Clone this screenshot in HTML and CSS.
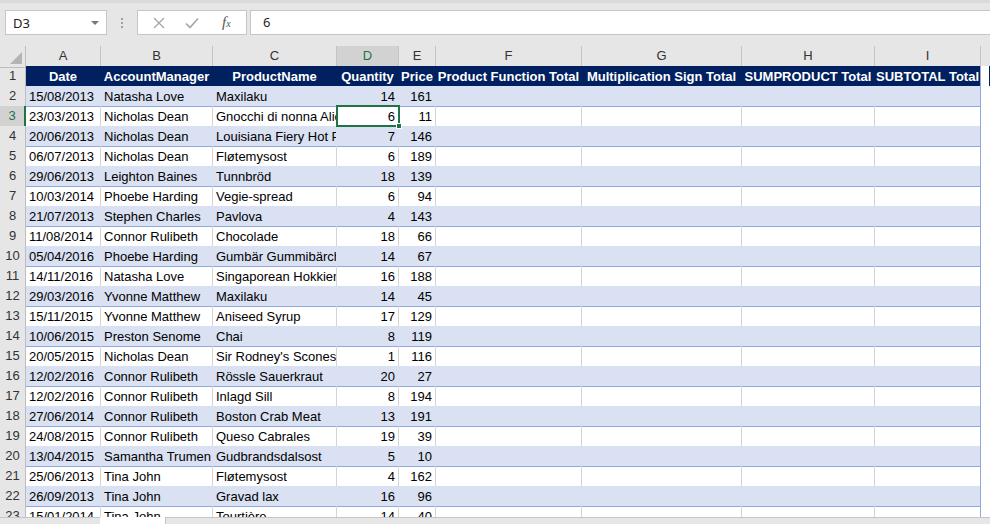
FILE: index.html
```html
<!DOCTYPE html>
<html>
<head>
<meta charset="utf-8">
<link rel="stylesheet" href="styles.css">
</head>
<body>
<div class="app">
  <div class="fbar">
    <div class="namebox"><span class="nb-text">D3</span><span class="nb-arrow"></span></div>
    <div class="dots"><i></i><i></i><i></i></div>
    <div class="btns">
      <svg class="ic-x" width="12" height="12" viewBox="0 0 12 12"><path d="M1 1L11 11M11 1L1 11" stroke="#a6a6a6" stroke-width="1.3" fill="none"/></svg>
      <svg class="ic-ok" width="14" height="12" viewBox="0 0 14 12"><path d="M1 6.5L5 10.5L13 1.5" stroke="#a6a6a6" stroke-width="1.6" fill="none"/></svg>
      <span class="fx">f<sub>x</sub></span>
    </div>
    <div class="finput">6</div>
  </div>
  <div class="sheet">
    <div class="row colhdr">
      <div class="corner"><span class="tri"></span></div>
      <div class="ch">A</div><div class="ch">B</div><div class="ch">C</div><div class="ch sel">D</div><div class="ch">E</div><div class="ch">F</div><div class="ch">G</div><div class="ch">H</div><div class="ch">I</div><div class="ch last"></div>
    </div>
    <div class="row thead">
      <div class="rh">1</div>
      <div class="c h">Date</div><div class="c h">AccountManager</div><div class="c h">ProductName</div><div class="c h">Quantity</div><div class="c h">Price</div><div class="c h">Product Function Total</div><div class="c h">Multiplication Sign Total</div><div class="c h">SUMPRODUCT Total</div><div class="c h">SUBTOTAL Total</div><div class="c x"></div>
    </div>
    <div class="row band"><div class="rh">2</div><div class="c">15/08/2013</div><div class="c">Natasha Love</div><div class="c">Maxilaku</div><div class="c n">14</div><div class="c n">161</div><div class="c"></div><div class="c"></div><div class="c"></div><div class="c"></div><div class="c x"></div></div>
    <div class="row plain"><div class="rh rsel">3</div><div class="c">23/03/2013</div><div class="c">Nicholas Dean</div><div class="c">Gnocchi di nonna Alice</div><div class="c n active">6<span class="selbox"></span><span class="handle"></span></div><div class="c n">11</div><div class="c"></div><div class="c"></div><div class="c"></div><div class="c"></div><div class="c x"></div></div>
    <div class="row band"><div class="rh">4</div><div class="c">20/06/2013</div><div class="c">Nicholas Dean</div><div class="c">Louisiana Fiery Hot Pepper Sauce</div><div class="c n">7</div><div class="c n">146</div><div class="c"></div><div class="c"></div><div class="c"></div><div class="c"></div><div class="c x"></div></div>
    <div class="row plain"><div class="rh">5</div><div class="c">06/07/2013</div><div class="c">Nicholas Dean</div><div class="c">Fløtemysost</div><div class="c n">6</div><div class="c n">189</div><div class="c"></div><div class="c"></div><div class="c"></div><div class="c"></div><div class="c x"></div></div>
    <div class="row band"><div class="rh">6</div><div class="c">29/06/2013</div><div class="c">Leighton Baines</div><div class="c">Tunnbröd</div><div class="c n">18</div><div class="c n">139</div><div class="c"></div><div class="c"></div><div class="c"></div><div class="c"></div><div class="c x"></div></div>
    <div class="row plain"><div class="rh">7</div><div class="c">10/03/2014</div><div class="c">Phoebe Harding</div><div class="c">Vegie-spread</div><div class="c n">6</div><div class="c n">94</div><div class="c"></div><div class="c"></div><div class="c"></div><div class="c"></div><div class="c x"></div></div>
    <div class="row band"><div class="rh">8</div><div class="c">21/07/2013</div><div class="c">Stephen Charles</div><div class="c">Pavlova</div><div class="c n">4</div><div class="c n">143</div><div class="c"></div><div class="c"></div><div class="c"></div><div class="c"></div><div class="c x"></div></div>
    <div class="row plain"><div class="rh">9</div><div class="c">11/08/2014</div><div class="c">Connor Rulibeth</div><div class="c">Chocolade</div><div class="c n">18</div><div class="c n">66</div><div class="c"></div><div class="c"></div><div class="c"></div><div class="c"></div><div class="c x"></div></div>
    <div class="row band"><div class="rh">10</div><div class="c">05/04/2016</div><div class="c">Phoebe Harding</div><div class="c">Gumbär Gummibärchen</div><div class="c n">14</div><div class="c n">67</div><div class="c"></div><div class="c"></div><div class="c"></div><div class="c"></div><div class="c x"></div></div>
    <div class="row plain"><div class="rh">11</div><div class="c">14/11/2016</div><div class="c">Natasha Love</div><div class="c">Singaporean Hokkien Fried Mee</div><div class="c n">16</div><div class="c n">188</div><div class="c"></div><div class="c"></div><div class="c"></div><div class="c"></div><div class="c x"></div></div>
    <div class="row band"><div class="rh">12</div><div class="c">29/03/2016</div><div class="c">Yvonne Matthew</div><div class="c">Maxilaku</div><div class="c n">14</div><div class="c n">45</div><div class="c"></div><div class="c"></div><div class="c"></div><div class="c"></div><div class="c x"></div></div>
    <div class="row plain"><div class="rh">13</div><div class="c">15/11/2015</div><div class="c">Yvonne Matthew</div><div class="c">Aniseed Syrup</div><div class="c n">17</div><div class="c n">129</div><div class="c"></div><div class="c"></div><div class="c"></div><div class="c"></div><div class="c x"></div></div>
    <div class="row band"><div class="rh">14</div><div class="c">10/06/2015</div><div class="c">Preston Senome</div><div class="c">Chai</div><div class="c n">8</div><div class="c n">119</div><div class="c"></div><div class="c"></div><div class="c"></div><div class="c"></div><div class="c x"></div></div>
    <div class="row plain"><div class="rh">15</div><div class="c">20/05/2015</div><div class="c">Nicholas Dean</div><div class="c">Sir Rodney's Scones</div><div class="c n">1</div><div class="c n">116</div><div class="c"></div><div class="c"></div><div class="c"></div><div class="c"></div><div class="c x"></div></div>
    <div class="row band"><div class="rh">16</div><div class="c">12/02/2016</div><div class="c">Connor Rulibeth</div><div class="c">Rössle Sauerkraut</div><div class="c n">20</div><div class="c n">27</div><div class="c"></div><div class="c"></div><div class="c"></div><div class="c"></div><div class="c x"></div></div>
    <div class="row plain"><div class="rh">17</div><div class="c">12/02/2016</div><div class="c">Connor Rulibeth</div><div class="c">Inlagd Sill</div><div class="c n">8</div><div class="c n">194</div><div class="c"></div><div class="c"></div><div class="c"></div><div class="c"></div><div class="c x"></div></div>
    <div class="row band"><div class="rh">18</div><div class="c">27/06/2014</div><div class="c">Connor Rulibeth</div><div class="c">Boston Crab Meat</div><div class="c n">13</div><div class="c n">191</div><div class="c"></div><div class="c"></div><div class="c"></div><div class="c"></div><div class="c x"></div></div>
    <div class="row plain"><div class="rh">19</div><div class="c">24/08/2015</div><div class="c">Connor Rulibeth</div><div class="c">Queso Cabrales</div><div class="c n">19</div><div class="c n">39</div><div class="c"></div><div class="c"></div><div class="c"></div><div class="c"></div><div class="c x"></div></div>
    <div class="row band"><div class="rh">20</div><div class="c">13/04/2015</div><div class="c">Samantha Trumen</div><div class="c">Gudbrandsdalsost</div><div class="c n">5</div><div class="c n">10</div><div class="c"></div><div class="c"></div><div class="c"></div><div class="c"></div><div class="c x"></div></div>
    <div class="row plain"><div class="rh">21</div><div class="c">25/06/2013</div><div class="c">Tina John</div><div class="c">Fløtemysost</div><div class="c n">4</div><div class="c n">162</div><div class="c"></div><div class="c"></div><div class="c"></div><div class="c"></div><div class="c x"></div></div>
    <div class="row band"><div class="rh">22</div><div class="c">26/09/2013</div><div class="c">Tina John</div><div class="c">Gravad lax</div><div class="c n">16</div><div class="c n">96</div><div class="c"></div><div class="c"></div><div class="c"></div><div class="c"></div><div class="c x"></div></div>
    <div class="row plain"><div class="rh">23</div><div class="c">15/01/2014</div><div class="c">Tina John</div><div class="c">Tourtière</div><div class="c n">14</div><div class="c n">40</div><div class="c"></div><div class="c"></div><div class="c"></div><div class="c"></div><div class="c x"></div></div>
  </div>
  <div class="tabs">
    <div class="tab-l"></div>
    <div class="tab-active"></div>
    <div class="tab-r"></div>
  </div>
</div>
</body>
</html>
```
FILE: styles.css
```css
* { box-sizing: border-box; }
html, body { margin: 0; padding: 0; }
body { width: 990px; height: 524px; overflow: hidden; background: #fff; }
.app { width: 990px; height: 524px; display: flex; flex-direction: column; font-family: "Liberation Sans", Arial, sans-serif; }

.fbar { height: 46px; flex: none; background: #e6e6e6; display: flex; align-items: flex-start; border-top: 3px solid #dadada; padding-top: 7px; }
.namebox { margin-left: 5px; width: 102px; height: 25px; background: #fff; border: 1px solid #c6c6c6; display: flex; align-items: center; justify-content: space-between; padding: 0 7px 0 7px; font-family: "Noto Sans", "Open Sans", sans-serif; font-size: 13px; color: #222; }
.nb-arrow { width: 0; height: 0; border-left: 4px solid transparent; border-right: 4px solid transparent; border-top: 4px solid #777; }
.dots { width: 30px; height: 25px; display: flex; flex-direction: column; align-items: center; justify-content: center; gap: 2px; }
.dots i { display: block; width: 2px; height: 2px; background: #a0a0a0; }
.btns { width: 110px; height: 25px; background: #fff; border: 1px solid #c6c6c6; display: flex; align-items: center; padding-left: 15px; }
.ic-x { margin-right: 20px; }
.ic-ok { margin-right: 23px; }
.fx { font-family: "Liberation Serif", serif; font-style: italic; font-size: 15px; color: #555; line-height: 1; }
.fx sub { font-size: 10px; vertical-align: 0; }
.finput { margin-left: 3px; flex: 1; height: 25px; background: #fff; border: 1px solid #c6c6c6; border-right: none; padding-left: 12px; font-family: "Noto Sans", "Open Sans", sans-serif; font-size: 13px; line-height: 23px; color: #222; }

.sheet { height: 471px; flex: none; overflow: hidden; background: #fff; }
.row { display: grid; grid-template-columns: 26px 75px 112px 124px 62px 37px 146px 160px 133px 106px 9px; height: 20px; }

.colhdr { background: #e6e6e6; }
.corner { border-right: 1px solid #bdbdbd; border-bottom: 1px solid #bdbdbd; position: relative; }
.tri { position: absolute; right: 3px; bottom: 3px; width: 0; height: 0; border-left: 12px solid transparent; border-bottom: 12px solid #b4b4b4; }
.ch { border-right: 1px solid #c4c4c4; border-bottom: 1px solid #bdbdbd; font-size: 13px; text-align: center; line-height: 20px; color: #333; }
.ch.sel { background: #d2d2d2; color: #217346; border-bottom: 2px solid #217346; }
.ch.last { border-right: none; }

.rh { background: #e6e6e6; border-right: 1px solid #bdbdbd; border-bottom: 1px solid #d8d8d8; font-size: 13px; color: #333; text-align: center; line-height: 20px; }
.rh.rsel { background: #d2d2d2; color: #217346; border-right: 2px solid #217346; }

.c { font-size: 13px; line-height: 19px; padding: 1px 3px 0 3px; white-space: nowrap; overflow: hidden; color: #000; border-right: 1px solid #d4d4d4; border-bottom: 1px solid #8ea9db; }
.c.n { text-align: right; }
.c.x { border-right: none; border-bottom: 1px solid #d4d4d4; background: #fff; }
.row .c:nth-child(10) { border-right: 1px solid #8ea9db; }

.thead .c { background: #002060; color: #fff; font-weight: bold; text-align: center; padding: 1px 0 0 0; border-right: 1px solid #002060; border-bottom: 1px solid #8ea9db; }
.thead .c.x { background: #fff; border-bottom: 1px solid #d4d4d4; }
.thead .c:nth-child(10) { border-right: 1px solid #8ea9db; }

.band .c { background: #d9e1f2; border-right-color: #d9e1f2; }
.band .c.x { background: #fff; border-right: none; }
.band .c:nth-child(10) { border-right-color: #8ea9db; }

.active { position: relative; overflow: visible; }
.selbox { position: absolute; left: -1px; top: -1px; right: -2px; bottom: -1px; border: 2px solid #217346; pointer-events: none; }
.handle { position: absolute; right: -4px; bottom: -3px; width: 6px; height: 6px; background: #217346; border: 1px solid #fff; }

.tabs { height: 7px; flex: none; display: flex; background: #e6e6e6; }
.tab-l { width: 100px; border-top: 1px solid #c6c6c6; }
.tab-active { width: 65px; background: #fff; }
.tab-r { flex: 1; border-top: 1px solid #c6c6c6; border-left: 1px solid #c6c6c6; }
```
